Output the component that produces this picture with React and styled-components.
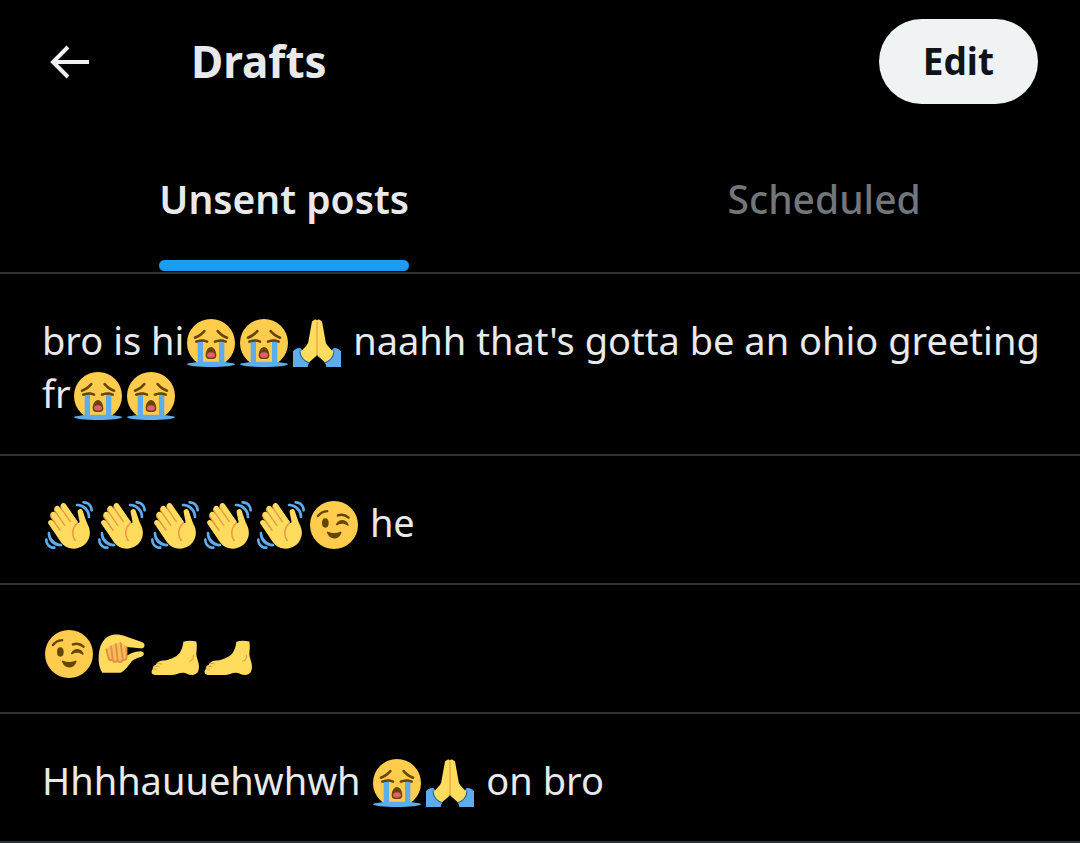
import React, { useState } from 'react';
import styled, { createGlobalStyle } from 'styled-components';

const GlobalStyle = createGlobalStyle`
  *, *::before, *::after {
    box-sizing: border-box;
  }

  body {
    margin: 0;
    background-color: #000;
    color: #e7e9ea;
    font-family: 'Noto Sans', 'Open Sans', sans-serif;
  }
`;

const SobIcon = () => (
  <Emoji viewBox="0 0 36 36" role="img" aria-label="loudly crying face">
    <circle fill="#FFCC4D" cx="18" cy="18" r="18" />
    <path fill="#664500" d="M22 27c0 2.763-1.791 3-4 3-2.21 0-4-.237-4-3 0-2.761 1.79-6 4-6 2.209 0 4 3.239 4 6zm8-12c-.124 0-.25-.023-.371-.072-5.229-2.091-7.372-5.241-7.461-5.374-.307-.46-.183-1.081.277-1.387.459-.306 1.077-.184 1.385.274.019.027 1.93 2.785 6.541 4.629.513.206.763.787.558 1.3-.157.392-.533.63-.929.63zM6 15c-.397 0-.772-.238-.929-.629-.205-.513.044-1.095.557-1.3 4.612-1.844 6.523-4.602 6.542-4.629.308-.456.929-.577 1.386-.27.457.308.581.925.275 1.383-.089.133-2.232 3.283-7.46 5.374C6.25 14.977 6.124 15 6 15z" />
    <path fill="#5DADEC" d="M24 16h4v19l-4-.046V16zM8 35l4-.046V16H8v19z" />
    <path fill="#664500" d="M14.999 18c-.15 0-.303-.034-.446-.105-3.512-1.756-7.07-.018-7.105 0-.495.249-1.095.046-1.342-.447-.247-.494-.047-1.095.447-1.342.182-.09 4.498-2.197 8.895 0 .494.247.694.848.447 1.342-.176.35-.529.552-.896.552zm14 0c-.15 0-.303-.034-.446-.105-3.513-1.756-7.07-.018-7.105 0-.494.248-1.094.047-1.342-.447-.247-.494-.047-1.095.447-1.342.182-.09 4.501-2.196 8.895 0 .494.247.694.848.447 1.342-.176.35-.529.552-.896.552z" />
    <ellipse fill="#5DADEC" cx="18" cy="34" rx="18" ry="2" />
    <ellipse fill="#E75A70" cx="18" cy="27" rx="3" ry="2" />
  </Emoji>
);

const PrayIcon = () => (
  <Emoji viewBox="0 0 36 36" role="img" aria-label="folded hands">
    <path fill="#5DADEC" d="M0 24.2c1.200-1.700 3-2.700 5.500-2.500l7.500 9.300-1.500 3.200-.5 1.800H0zM36 24.200c-1.200-1.700-3-2.700-5.500-2.500L23 31l1.500 3.200.5 1.800H36z" />
    <path fill="#226699" d="M5.500 21.700c-.6 3 1.400 7.800 7.100 10.500l-.8.900C6 30.800 3.800 26 5.500 21.700zM30.500 21.700c.6 3-1.400 7.800-7.100 10.500l.8.900c5.800-2.300 8-7.100 6.300-11.400z" />
    <path fill="#FFDC5D" d="M18 1.200C17.600.2 16 0 15.400 1.100c-1 .2-1.300 1-1.400 2L11.700 16c-.2 1.500-.5 2.600-1.400 3.700L5.800 24.500c.2 3.500 2.600 6.700 6.500 7.700l4.500-3.800c.8-.7 1.200-1.300 1.200-2.300 0 1 .4 1.600 1.200 2.300l4.500 3.800c3.900-1 6.300-4.200 6.500-7.700l-4.500-4.800c-.9-1.100-1.200-2.200-1.400-3.700L22 3.100c-.1-1-.4-1.800-1.400-2C20 0 18.400.2 18 1.200z" />
    <path fill="none" stroke="#EF9645" strokeWidth=".8" strokeLinecap="round" d="M18 2.500v23.800" />
  </Emoji>
);

const WaveIcon = () => (
  <Emoji viewBox="0 0 36 36" role="img" aria-label="waving hand">
    <path fill="#EF9645" d="M4.861 9.147c.94-.657 2.357-.531 3.201.166l-.968-1.407c-.779-1.111-.5-2.313.612-3.093 1.112-.777 4.263 1.312 4.263 1.312-.786-1.122-.639-2.544.483-3.331 1.122-.784 2.68-.513 3.467.611l10.292 14.72L25 31l-11.083-4.042L4.25 12.625c-.793-1.129-.519-2.686.611-3.478z" />
    <path fill="#FFDC5D" d="M2.695 17.336s-1.132-1.65.519-2.781c1.649-1.131 2.78.518 2.78.518l5.251 7.658c.181-.302.379-.6.6-.894L4.557 11.21s-1.131-1.649.519-2.78c1.649-1.131 2.78.518 2.78.518l6.855 9.997c.255-.208.516-.417.785-.622L7.549 6.732s-1.131-1.649.519-2.78c1.649-1.131 2.78.518 2.78.518l7.947 11.589c.292-.179.581-.334.871-.498L12.238 4.729s-1.131-1.649.518-2.78c1.649-1.131 2.78.518 2.78.518l7.854 11.454 1.194 1.742c-4.948 3.394-5.419 9.779-2.592 13.902.565.825 1.39.26 1.39.26-3.393-4.949-2.357-10.51 2.592-13.903L24.515 8.62s-.545-1.924 1.378-2.47c1.924-.545 2.47 1.379 2.47 1.379l1.685 5.004c.668 1.984 1.379 3.961 2.32 5.831 2.657 5.28 1.07 11.842-3.94 15.279-5.465 3.747-12.936 2.354-16.684-3.11L2.695 17.336z" />
    <g fill="#5DADEC">
      <path d="M12 32.042C8 32.042 3.958 28 3.958 24c0-.553-.405-1-.958-1s-1.042.447-1.042 1C1.958 30 6 34.042 12 34.042c.553 0 1-.489 1-1.042s-.447-.958-1-.958z" />
      <path d="M7 34c-3 0-5-2-5-5 0-.553-.447-1-1-1s-1 .447-1 1c0 4 3 7 7 7 .553 0 1-.447 1-1s-.447-1-1-1zM24 2c-.552 0-1 .448-1 1s.448 1 1 1c4 0 8 3.589 8 8 0 .552.448 1 1 1s1-.448 1-1c0-5.514-4-10-10-10z" />
      <path d="M29 .042c-.552 0-1 .406-1 .958s.448 1.042 1 1.042c3 0 4.958 2.225 4.958 4.958 0 .552.489 1 1.042 1s.958-.448.958-1C35.958 3.163 33 .042 29 .042z" />
    </g>
  </Emoji>
);

const WinkIcon = () => (
  <Emoji viewBox="0 0 36 36" role="img" aria-label="winking face">
    <circle fill="#FFCC4D" cx="18" cy="18" r="18" />
    <ellipse fill="#664500" cx="11.5" cy="16.5" rx="2.500" ry="3.500" />
    <path fill="#664500" d="M19.600 17.200c1.200-2.300 2.900-3.100 4.900-3 2.200.1 3.500 1.400 4.400 3.400.4.900-.4 1.300-1 .8-1.900-1.500-4.800-1.700-7.200-.4-.8.4-1.500 0-1.100-.8z" />
    <path fill="none" stroke="#664500" strokeWidth="1.800" strokeLinecap="round" d="M5.900 11.300c1.700-2.200 3.900-3.500 7-3.700M20.900 10.800c3-.9 5.700-.4 8 1.700" />
    <path fill="#664500" d="M12.800 24c-.5-.6.100-1.300.8-1 3 1.300 6.100 1.300 9 0 .7-.3 1.300.4.900 1.100-1 2.500-3 4-5.400 4s-4.300-1.500-5.300-4.100z" />
  </Emoji>
);

const PinchIcon = () => (
  <Emoji viewBox="0 0 36 36" role="img" aria-label="pinching hand">
    <path fill="#FFDC5D" d="M3.200 32c-2-3-3-7.500-2.700-12C.8 12.500 3.500 7 8 4.700c3.500-1.800 8-1.500 12.500-.1L32.800 9c1.700.6 2.500 1.900 2 3.200-.4 1.300-1.700 1.800-3.300 1.500l-10-1v6.600l3.500-1.800c2-.9 4.700-1.500 7-1.500 2.600 0 3.300 2.900 1 3.900-3 1.200-6 1.700-7.700 3.500-2.500 3.300-4.500 6.600-8.300 8.600z" />
    <path fill="#F9BE58" d="M6.300 14.200l3.300-2.500 3.600-1.700 3.600-.8 4.700 3.200V21c-.4 1.700-1.500 2.300-2.900 2-1 1.500-2.600 1.800-3.900 1-1.300 1-3 .8-4-.7-1.300.2-2.400-.6-2.800-2z" />
    <path fill="none" stroke="#E28F42" strokeWidth="1.400" strokeLinecap="round" strokeLinejoin="round" d="M6.300 14.500l1.500 6.500c.6 2.400 3.400 2.100 3.100-.3L9.800 12.500M10.900 22.500c1 2.200 4.200 1.500 3.700-.9L13.400 10.800M14.700 23c1.200 1.900 4.100 1 3.800-1.400L17 9.800M18.600 22.300c1.900.7 2.800-.6 2.800-2.300v-7.500" />
  </Emoji>
);

const FootIcon = () => (
  <Emoji viewBox="0 0 36 36" role="img" aria-label="foot">
    <path fill="#FFDC5D" d="M24.300 8.800c3-1 6.500-.9 9.700-.2.800 3.300.1 6.800 0 9.800.2 2.900 2 5.600 2 9 0 3.900-1.700 6.300-5.200 6.300-2.800 0-4.300-1.700-6.800-1.700-3.200 0-5.500 1.700-9 1.700H3c-1.700 0-2.800-1-2.600-2.500.2-1.200 1.200-1.800 1.100-2.700.1-1.300 1-2.100 2.100-2.400.9-2.400 3.400-3.200 6.400-3.300 3.600-.3 8.500-2.200 11.200-5.200 1.700-2.200 2.700-5.500 3.100-9z" />
    <path fill="none" stroke="#EF9645" strokeWidth=".8" strokeLinecap="round" d="M1.500 29l2.500.4M3 27l3 .4M4.700 25l3.400.5M31.800 19c.2 2-.8 3.700-2.700 4.400" />
  </Emoji>
);

const emojis = {
  '😭': SobIcon,
  '🙏': PrayIcon,
  '👋': WaveIcon,
  '😉': WinkIcon,
  '🤏': PinchIcon,
  '🦶': FootIcon,
};

const drafts = [
  "bro is hi😭😭🙏 naahh that's gotta be an ohio greeting fr😭😭",
  '👋👋👋👋👋😉 he',
  '😉🤏🦶🦶',
  'Hhhhauuehwhwh 😭🙏 on bro',
];

const DraftText = ({ text }) =>
  text.split(/(😭|🙏|👋|😉|🤏|🦶)/u).map((part, i) => {
    const Icon = emojis[part];
    return Icon ? <Icon key={i} /> : part;
  });

const App = () => {
  const [tab, setTab] = useState('unsent');

  return (
    <>
      <GlobalStyle />
      <Header>
        <BackButton type="button" aria-label="Back">
          <svg width="40" height="34" viewBox="0 0 40 34" fill="none" stroke="currentColor" strokeWidth="4">
            <path d="M18 2L3 17l15 15M3 17h36" />
          </svg>
        </BackButton>
        <Title>Drafts</Title>
        <EditButton type="button">Edit</EditButton>
      </Header>
      <Tabs role="tablist">
        <Tab type="button" role="tab" aria-selected={tab === 'unsent'} $active={tab === 'unsent'} onClick={() => setTab('unsent')}>
          <TabLabel $active={tab === 'unsent'}>Unsent posts</TabLabel>
        </Tab>
        <Tab type="button" role="tab" aria-selected={tab === 'scheduled'} $active={tab === 'scheduled'} onClick={() => setTab('scheduled')}>
          <TabLabel $active={tab === 'scheduled'}>Scheduled</TabLabel>
        </Tab>
      </Tabs>
      <DraftList>
        {drafts.map((text) => (
          <Draft key={text}>
            <DraftText text={text} />
          </Draft>
        ))}
      </DraftList>
    </>
  );
};

const Header = styled.header`
  display: flex;
  align-items: center;
  height: 123px;
  padding: 0 42px 0 50px;
`;

const BackButton = styled.button`
  display: flex;
  padding: 0;
  border: none;
  background: none;
  color: #eff3f4;
  cursor: pointer;
`;

const Title = styled.h1`
  flex: 1;
  margin: 0 0 0 101px;
  padding-bottom: 2px;
  font-size: 44px;
  font-weight: 700;
  line-height: 60px;
`;

const EditButton = styled.button`
  height: 85px;
  padding: 0 44px 2px;
  border: none;
  border-radius: 43px;
  background-color: #eff3f4;
  color: #0f1419;
  font-family: inherit;
  font-size: 37px;
  font-weight: 700;
  cursor: pointer;
`;

const Tabs = styled.div`
  display: flex;
  height: 151px;
  border-bottom: 2px solid #2f3336;
`;

const Tab = styled.button`
  display: flex;
  flex: 1 1 auto;
  justify-content: center;
  padding: 0;
  border: none;
  background: none;
  color: ${({ $active }) => ($active ? '#e7e9ea' : '#71767b')};
  font-family: inherit;
  font-size: 39px;
  font-weight: ${({ $active }) => ($active ? 600 : 500)};
  cursor: pointer;
`;

const TabLabel = styled.span`
  display: flex;
  align-items: center;
  height: 100%;
  padding-top: 2px;
  position: relative;

  &::after {
    content: '';
    display: ${({ $active }) => ($active ? 'block' : 'none')};
    position: absolute;
    left: 0;
    right: 0;
    bottom: 1px;
    height: 11px;
    border-radius: 6px;
    background-color: #1d9bf0;
  }
`;

const DraftList = styled.ul`
  margin: 0;
  padding: 0;
  list-style: none;
`;

const Draft = styled.li`
  padding: 40px 32px 34px 42px;
  border-bottom: 2px solid #2f3336;
  font-size: 38px;
  line-height: 53px;
`;

const Emoji = styled.svg`
  width: 48px;
  height: 48px;
  margin: 0 2px 0 3px;
  vertical-align: -12px;
`;

export default App;
